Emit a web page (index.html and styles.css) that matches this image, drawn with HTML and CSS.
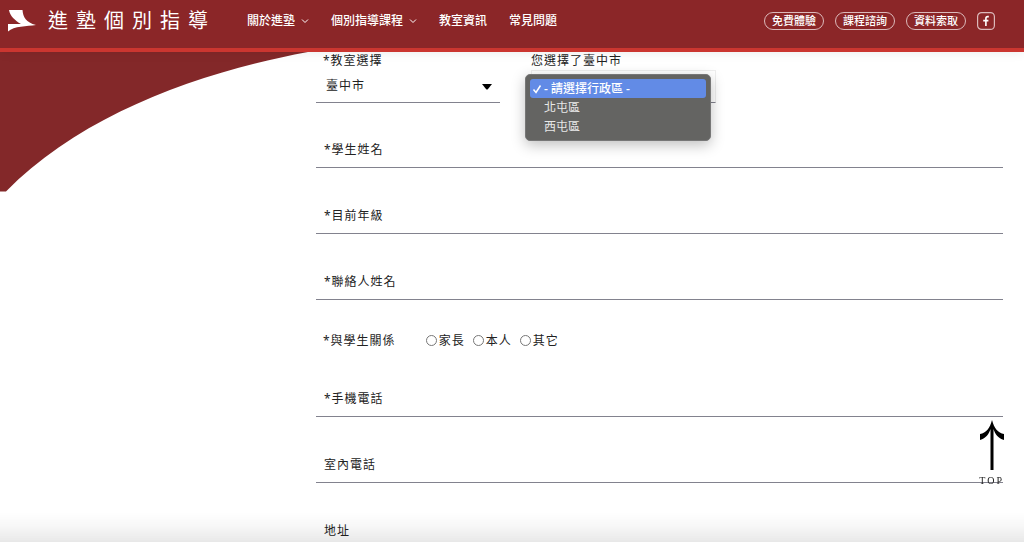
FILE: index.html
```html
<!DOCTYPE html>
<html lang="zh-Hant">
<head>
<meta charset="utf-8">
<title>進塾個別指導</title>
<link rel="stylesheet" href="styles.css">
</head>
<body>
<header class="header">
  <a class="brand" href="#">
    <svg class="brand-mark" viewBox="0 0 30 22" aria-hidden="true"><path d="M2 0H15.500C16 7 19 12.500 29 15C20 16.200 7 16 1 21.500V14H14C8 10.500 3 6 2 0Z" fill="#fff"/></svg>
    <span class="brand-name">進塾個別指導</span>
  </a>
  <nav class="nav">
    <a class="nav-link" href="#">關於進塾<svg class="chevron" viewBox="0 0 8 8" aria-hidden="true"><path d="M1 2.500 4 5.500 7 2.500"/></svg></a>
    <a class="nav-link" href="#">個別指導課程<svg class="chevron" viewBox="0 0 8 8" aria-hidden="true"><path d="M1 2.500 4 5.500 7 2.500"/></svg></a>
    <a class="nav-link" href="#">教室資訊</a>
    <a class="nav-link" href="#">常見問題</a>
  </nav>
  <div class="actions">
    <a class="pill" href="#">免費體驗</a>
    <a class="pill" href="#">課程諮詢</a>
    <a class="pill" href="#">資料索取</a>
    <a class="social" href="#" aria-label="Facebook"><svg viewBox="0 0 18 18" aria-hidden="true"><rect x=".6" y=".6" width="16.8" height="16.8" rx="4"/><path class="social-f" d="M11.800 4.600H10.800C9.400 4.600 8.900 5.400 8.900 6.500V14M6.200 8.600H11.400"/></svg></a>
  </div>
</header>

<svg class="curve" viewBox="0 0 308 140" aria-hidden="true"><path d="M0 0H308C200 20 82 62 6 139.500H0Z"/></svg>

<main class="main">
  <form class="form">
    <div class="pickers">
      <div class="picker">
        <label class="picker-label" for="city">*教室選擇</label>
        <div class="select-wrap">
          <select class="select" id="city"><option>臺中市</option></select>
          <svg class="caret" viewBox="0 0 10 6" aria-hidden="true"><path d="M0 0H10L6 5Q5 6 4 5Z"/></svg>
        </div>
      </div>
      <div class="picker picker-open">
        <label class="picker-label" for="district">您選擇了臺中市</label>
        <select class="select select-district" id="district"><option></option></select>
        <ul class="menu" role="listbox" aria-label="行政區">
          <li class="menu-item menu-item-on" role="option" aria-selected="true"><svg class="check" viewBox="0 0 10 10" aria-hidden="true"><path d="M1.500 5.500 4 8.500 8.500 1.500"/></svg>- 請選擇行政區 -</li>
          <li class="menu-item" role="option" aria-selected="false">北屯區</li>
          <li class="menu-item" role="option" aria-selected="false">西屯區</li>
        </ul>
      </div>
    </div>
    <input class="field" type="text" aria-label="學生姓名" placeholder="*學生姓名">
    <input class="field" type="text" aria-label="目前年級" placeholder="*目前年級">
    <input class="field" type="text" aria-label="聯絡人姓名" placeholder="*聯絡人姓名">
    <div class="relation" role="radiogroup" aria-labelledby="relation">
      <span class="relation-title" id="relation">*與學生關係</span>
      <label class="choice"><input class="radio" type="radio" name="relation">家長</label>
      <label class="choice"><input class="radio" type="radio" name="relation">本人</label>
      <label class="choice"><input class="radio" type="radio" name="relation">其它</label>
    </div>
    <input class="field" type="tel" aria-label="手機電話" placeholder="*手機電話">
    <input class="field" type="tel" aria-label="室內電話" placeholder="室內電話">
    <input class="field" type="text" aria-label="地址" placeholder="地址">
  </form>
</main>

<a class="top" href="#">
  <svg class="top-arrow" viewBox="0 0 24 50" aria-hidden="true"><path d="M12 0C14 8 18 13 24 14V20C18 18 15 14 13.500 9V50H10.500V9C9 14 6 18 0 20V14C6 13 10 8 12 0Z"/></svg>
  <span>TOP</span>
</a>
<div class="fade"></div>
</body>
</html>
```

FILE: styles.css
```css
* { box-sizing: border-box; }

html { scrollbar-width: none; }

body {
  margin: 0;
  background: #fff;
  color: #222;
  font-family: "Noto Sans", "Noto Sans CJK TC", sans-serif;
  font-size: 12px;
  line-height: 18px;
}

a { color: inherit; text-decoration: none; }

.header {
  position: sticky;
  top: 0;
  z-index: 2;
  display: flex;
  align-items: center;
  height: 52px;
  padding: 0 29px 6px 7px;
  background: #8b2628;
  border-bottom: 4px solid #cb3630;
  box-shadow: 0 1px 10px rgba(0, 0, 0, 0.08);
  color: #fff;
}

.brand { display: flex; align-items: center; gap: 11px; }
.brand-mark { width: 30px; height: 22px; }
.brand-name {
  font-size: 20px;
  font-weight: 400;
  line-height: 26px;
  letter-spacing: 8px;
}

.nav { display: flex; gap: 22px; margin-left: 31px; font-weight: 500; }
.nav-link { display: flex; align-items: center; gap: 6px; }
.chevron { width: 8px; height: 8px; fill: none; stroke: #fff; }

.actions { display: flex; align-items: center; gap: 11px; margin-left: auto; }
.pill {
  padding: 0 7px;
  border: 1px solid #dcb9ba;
  border-radius: 9px;
  font-size: 11px;
  font-weight: 500;
  line-height: 16px;
}
.social { display: flex; }
.social svg { width: 18px; height: 18px; fill: none; stroke: #dcb9ba; stroke-width: 1.2; }
.social .social-f { stroke: #fff; stroke-width: 1.6; }

.curve {
  position: absolute;
  top: 52px;
  left: 0;
  width: 308px;
  height: 140px;
  fill: #832829;
}

.main { padding: 0 21px 0 316px; }
.form { display: flex; flex-direction: column; letter-spacing: 1px; }

.pickers { display: flex; gap: 31px; margin-bottom: 29px; }
.picker { position: relative; width: 184px; }
.picker-label { display: block; padding-left: 7px; }
.picker-open { width: 185px; }
.picker-open .picker-label { padding-left: 0; }

.select-wrap { position: relative; }
.select {
  appearance: none;
  display: block;
  width: 100%;
  height: 33px;
  padding: 0 10px;
  border: 0;
  border-bottom: 1px solid #82828e;
  border-radius: 0;
  background: transparent;
  color: #222;
  font: inherit;
  letter-spacing: inherit;
}
.caret {
  position: absolute;
  top: 14px;
  right: 8px;
  width: 10px;
  height: 6px;
  fill: #000;
  pointer-events: none;
}
.select-district {
  border: 1px solid #eee;
  border-bottom-color: #82828e;
  background: #fff;
}

.menu {
  position: absolute;
  top: 22px;
  left: -6px;
  width: 186px;
  margin: 0;
  padding: 4px;
  border: 1px solid #777;
  border-radius: 5px;
  background: #646462;
  box-shadow: 0 4px 14px rgba(0, 0, 0, 0.25);
  color: #e8e8e8;
  letter-spacing: 0;
  list-style: none;
}
.menu-item { position: relative; padding-left: 14px; line-height: 19px; }
.menu-item-on { border-radius: 3px; background: #628be6; color: #fff; font-weight: 500; }
.check {
  position: absolute;
  top: 5px;
  left: 2px;
  width: 10px;
  height: 10px;
  fill: none;
  stroke: #fff;
  stroke-width: 1.5;
}

.field {
  width: 100%;
  height: 36px;
  margin-bottom: 30px;
  padding: 0 8px;
  border: 0;
  border-bottom: 1px solid #82828e;
  background: transparent;
  font: inherit;
  letter-spacing: inherit;
}
.field::placeholder { color: #222; opacity: 1; }

.relation { display: flex; align-items: center; gap: 8px; height: 21px; margin-bottom: 30px; padding-left: 7px; }
.relation-title { margin-right: 22px; }
.choice { display: flex; align-items: center; gap: 2px; }
.radio {
  appearance: none;
  width: 11px;
  height: 11px;
  margin: 0;
  border: 1px solid #777;
  border-radius: 50%;
  background: #fff;
}

.top {
  position: fixed;
  right: 20px;
  bottom: 50px;
  display: flex;
  flex-direction: column;
  align-items: center;
  color: #222;
  font-family: "Liberation Serif", serif;
  font-size: 10px;
  line-height: 22px;
  letter-spacing: 2px;
}
.top-arrow { width: 24px; height: 50px; fill: #000; }

.fade {
  position: fixed;
  right: 0;
  bottom: 0;
  left: 0;
  height: 30px;
  background: linear-gradient(transparent, rgba(0, 0, 0, 0.03) 50%, rgba(0, 0, 0, 0.09));
  pointer-events: none;
}
```
